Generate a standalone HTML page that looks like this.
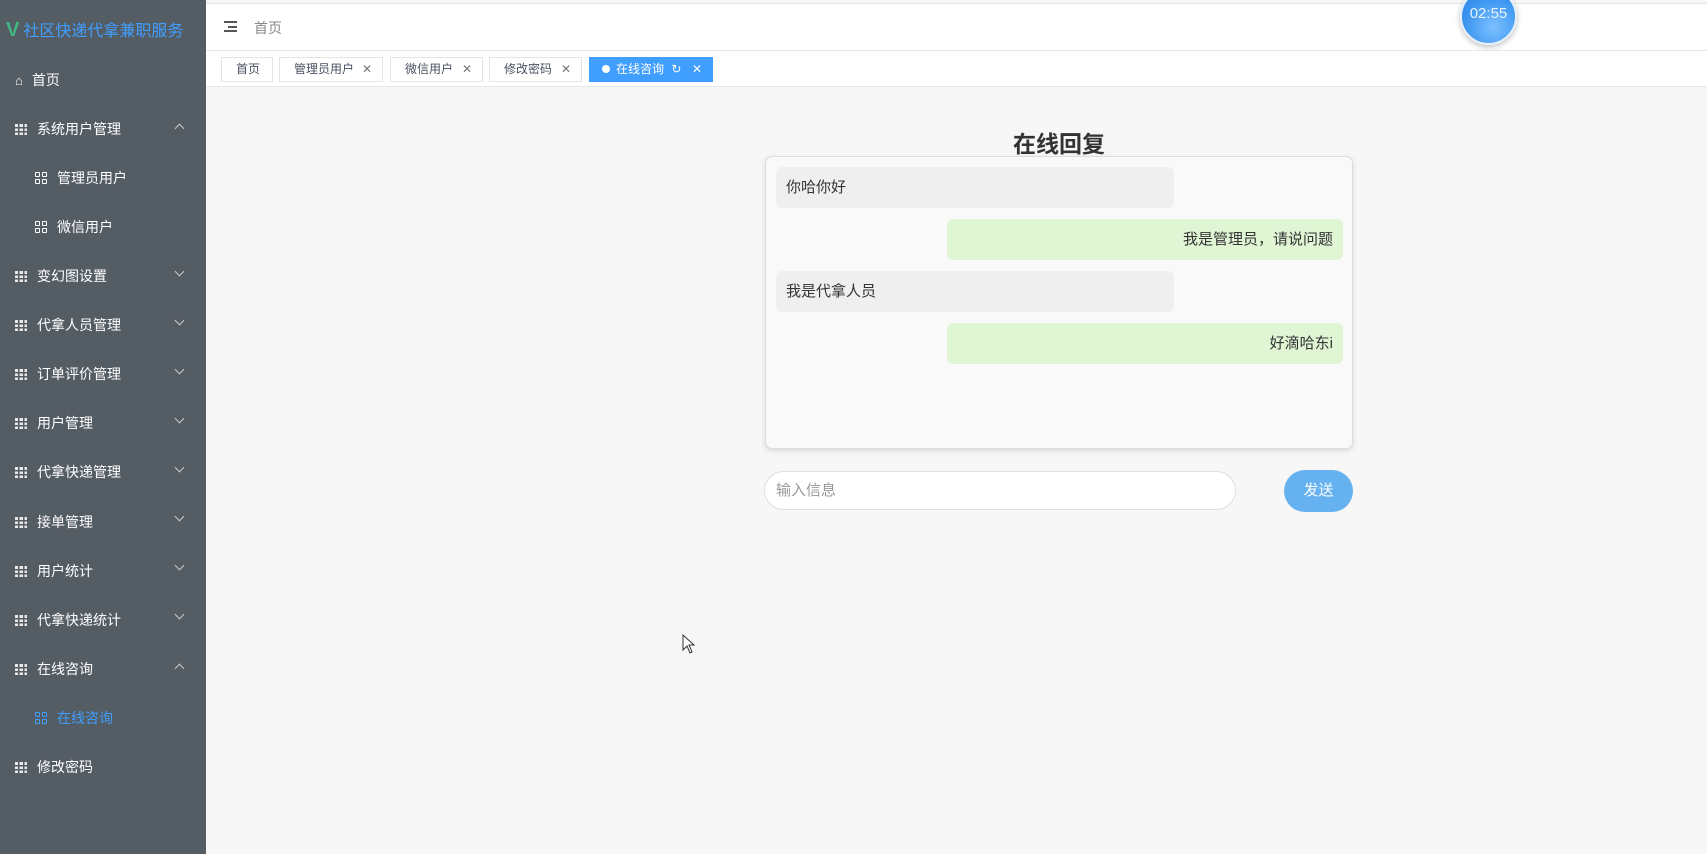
<!DOCTYPE html>
<html><head><meta charset="utf-8"><style>
*{box-sizing:border-box;margin:0;padding:0}
body{width:1707px;height:854px;overflow:hidden;font-family:"Liberation Sans","Noto Sans CJK SC",sans-serif;background:#f7f7f7;position:relative}
.side{position:absolute;left:0;top:0;width:206px;height:854px;background:#545c64;color:#fff}
.logo{position:absolute;left:6px;top:17px;font-size:16px;color:#409eff;white-space:nowrap}
.logo b{color:#41b883;font-size:20px;margin-right:4px}
.mi{position:absolute;left:15px;font-size:14px;color:#fff;display:flex;align-items:center}
.mi .ic{width:12px;height:11px;margin-right:10px;background:
linear-gradient(#545c64,#545c64) 3px 0/1.5px 100% no-repeat,
linear-gradient(#545c64,#545c64) 7.5px 0/1.5px 100% no-repeat,
linear-gradient(#545c64,#545c64) 0 3px/100% 1.5px no-repeat,
linear-gradient(#545c64,#545c64) 0 7px/100% 1.5px no-repeat,#e8e8e8}
.mi.sub{left:35px}
.gq{display:grid;grid-template-columns:5px 5px;gap:2px;margin-right:10px}
.gq i{width:5px;height:5px;border:1.2px solid currentColor;border-radius:1px}
.arr{position:absolute;left:176px;width:7px;height:7px;border-right:1.3px solid #ccc;border-bottom:1.3px solid #ccc;transform:rotate(45deg)}
.arr.up{transform:rotate(-135deg)}
.top{position:absolute;left:206px;top:3px;right:0;height:48px;background:#fff;border-top:1px solid #e4e4e4;border-bottom:1px solid #e6e6e6}
.tabs{position:absolute;left:206px;top:51px;right:0;height:36px;background:#fff;border-bottom:1px solid #e6e6e6}
.tab{position:absolute;top:6px;height:25px;border:1px solid #e4e4e4;font-size:12px;color:#495060;line-height:23px;padding-left:14px;background:#fff}
.tab.on{background:#409eff;border-color:#409eff;color:#fff}
.x{position:absolute;right:10px;top:0;font-size:12px;color:#777}
.card{position:absolute;left:765px;top:156px;width:588px;height:293px;background:#f9f9f9;border:1px solid #ddd;border-radius:7px;box-shadow:0 2px 6px rgba(0,0,0,.12)}
.b{position:absolute;height:41px;border-radius:6px;font-size:15px;color:#333;line-height:41px;padding:0 10px}
.l{left:10px;width:398px;background:#efefef}
.r{left:181px;width:396px;background:#dff5d4;text-align:right}
</style></head><body>
<div class="side">
<div class="logo"><b>V</b>社区快递代拿兼职服务</div>
<div class="mi" style="top:70px"><span style="font-size:13px;margin-right:9px">⌂</span>首页</div>
<div class="mi" style="top:119px"><span class="ic"></span>系统用户管理</div><span class="arr up" style="top:125px"></span>
<div class="mi sub" style="top:168px"><span class="gq"><i></i><i></i><i></i><i></i></span>管理员用户</div>
<div class="mi sub" style="top:217px"><span class="gq"><i></i><i></i><i></i><i></i></span>微信用户</div>
<div class="mi" style="top:266px"><span class="ic"></span>变幻图设置</div><span class="arr" style="top:268px"></span>
<div class="mi" style="top:315px"><span class="ic"></span>代拿人员管理</div><span class="arr" style="top:317px"></span>
<div class="mi" style="top:364px"><span class="ic"></span>订单评价管理</div><span class="arr" style="top:366px"></span>
<div class="mi" style="top:413px"><span class="ic"></span>用户管理</div><span class="arr" style="top:415px"></span>
<div class="mi" style="top:462px"><span class="ic"></span>代拿快递管理</div><span class="arr" style="top:464px"></span>
<div class="mi" style="top:512px"><span class="ic"></span>接单管理</div><span class="arr" style="top:513px"></span>
<div class="mi" style="top:561px"><span class="ic"></span>用户统计</div><span class="arr" style="top:562px"></span>
<div class="mi" style="top:610px"><span class="ic"></span>代拿快递统计</div><span class="arr" style="top:611px"></span>
<div class="mi" style="top:659px"><span class="ic"></span>在线咨询</div><span class="arr up" style="top:665px"></span>
<div class="mi sub" style="top:708px;color:#409eff"><span class="gq"><i></i><i></i><i></i><i></i></span>在线咨询</div>
<div class="mi" style="top:757px"><span class="ic"></span>修改密码</div>
</div>
<div class="top">
<div style="position:absolute;left:18px;top:17px;width:13px;height:11px;border-top:2px solid #555;border-bottom:2px solid #555"><div style="margin-top:2.5px;height:2px;background:#555;margin-left:4px"></div></div>
<div style="position:absolute;left:48px;top:14px;font-size:14px;color:#888">首页</div>
</div>
<div style="position:absolute;left:1460px;top:-12px;width:57px;height:57px;border-radius:50%;background:radial-gradient(circle at 60% 70%,#7cc0ff,#3a95f0 60%,#2f7fe0);box-shadow:0 2px 6px rgba(0,0,0,.25);border:2px solid #e6f0fb;color:#e8f3ff;font-size:15px;text-align:center;line-height:53px"><span style="position:relative;top:-3px">02:55</span></div>
<div class="tabs">
<div class="tab" style="left:15px;width:52px">首页</div>
<div class="tab" style="left:73px;width:104px">管理员用户<span class="x">✕</span></div>
<div class="tab" style="left:184px;width:93px">微信用户<span class="x">✕</span></div>
<div class="tab" style="left:283px;width:93px">修改密码<span class="x">✕</span></div>
<div class="tab on" style="left:383px;width:124px;padding-left:12px"><span style="display:inline-block;width:8px;height:8px;border-radius:50%;background:#fff;margin-right:6px"></span>在线咨询 <span style="margin-left:4px">↻</span><span class="x" style="color:#fff">✕</span></div>
</div>
<div style="position:absolute;left:765px;width:588px;top:125px;text-align:center;font-size:23px;font-weight:bold;color:#333">在线回复</div>
<div class="card">
<div class="b l" style="top:10px">你哈你好</div>
<div class="b r" style="top:62px">我是管理员，请说问题</div>
<div class="b l" style="top:114px">我是代拿人员</div>
<div class="b r" style="top:166px">好滴哈东i</div>
</div>
<div style="position:absolute;left:764px;top:471px;width:472px;height:39px;border:1px solid #dcdfe6;border-radius:20px;background:#fff;font-size:15px;color:#999;line-height:37px;padding-left:11px">输入信息</div>
<div style="position:absolute;left:1284px;top:470px;width:69px;height:42px;border-radius:21px;background:#66b1ef;color:#fff;font-size:15px;text-align:center;line-height:42px">发送</div>
<svg style="position:absolute;left:682px;top:634px" width="14" height="20"><path d="M1 1 L1 16 L5 12 L8 19 L10 18 L7 11 L12 11 Z" fill="#fff" stroke="#333" stroke-width="1"/></svg>
</body></html>
